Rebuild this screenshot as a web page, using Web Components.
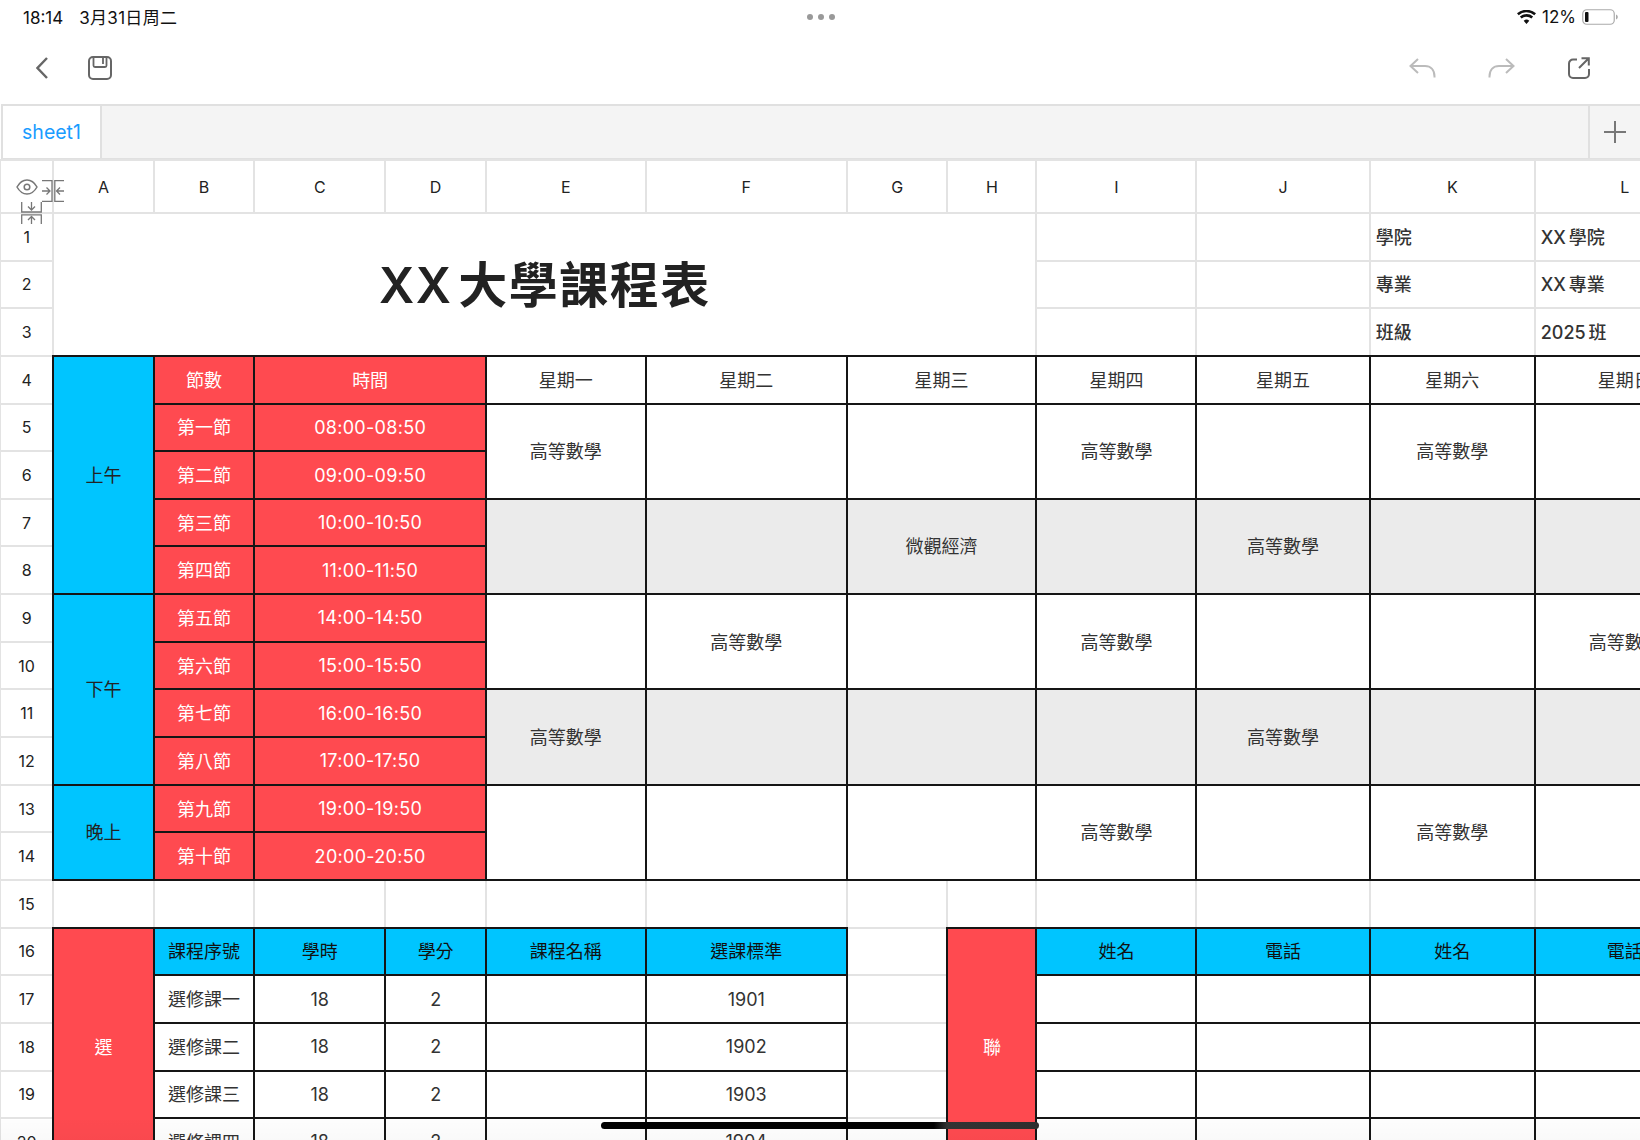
<!DOCTYPE html>
<html>
<head>
<meta charset="utf-8">
<title>XX 大學課程表</title>
<style>
html, body { margin: 0; width: 1640px; height: 1140px; overflow: hidden; background: #fff; }
body { position: relative; font-family: Inter, "Noto Sans CJK TC", sans-serif; }
</style>
</head>
<body>
<status-bar></status-bar>
<tool-bar></tool-bar>
<sheet-tabs>sheet1</sheet-tabs>
<sheet-grid></sheet-grid>
<home-bar></home-bar>

<script>
const icons = {
    back: [12, 22, '<path d="M11 1 1.5 11 11 21" fill="none" stroke="currentColor" stroke-width="2.4"/>'],
    save: [24, 24, '<rect x="1" y="1" width="22" height="22" rx="4" fill="none" stroke="currentColor" stroke-width="2"/><path d="M5.5 1v8.5a1.5 1.5 0 0 0 1.5 1.500h10a1.500 1.500 0 0 0 1.500-1.500V1M15 2v6" fill="none" stroke="currentColor" stroke-width="1.800"/>'],
    undo: [27, 20, '<path d="M9 1 1.500 8 9 15M2 8h14c5.500 0 9.500 3.500 9.500 10.500v1" fill="none" stroke="currentColor" stroke-width="2"/>'],
    redo: [27, 20, '<path d="M18 1 25.500 8 18 15M25 8H11C5.500 8 1.500 11.500 1.500 18.500v1" fill="none" stroke="currentColor" stroke-width="2"/>'],
    share: [22, 22, '<path d="M9 2.500H5a4 4 0 0 0-4 4V17a4 4 0 0 0 4 4h12a4 4 0 0 0 4-4v-5" fill="none" stroke="currentColor" stroke-width="2"/><path d="M11 11 20.500 1.500M13.500 1.200h7.300v7.300" fill="none" stroke="currentColor" stroke-width="2"/>'],
    plus: [22, 22, '<path d="M11 0v22M0 11h22" fill="none" stroke="currentColor" stroke-width="2"/>'],
    wifi: [19, 14, '<path d="M9.500 14 6.700 10.800a4.200 4.200 0 0 1 5.600 0ZM4.600 8.500 2.900 6.600a10 10 0 0 1 13.200 0l-1.700 1.900a7.400 7.400 0 0 0-9.800 0ZM1.700 5.200 0 3.300a14.500 14.500 0 0 1 19 0l-1.700 1.900a12 12 0 0 0-15.600 0Z" fill="currentColor"/>'],
    battery: [36, 16, '<rect x=".75" y=".75" width="31.500" height="14.500" rx="4" fill="none" stroke="#aaa" stroke-width="1.200"/><rect x="3" y="3" width="3.500" height="10" rx="1" fill="#111"/><path d="M34 5.500c1.200.4 1.800 1.300 1.800 2.500s-.6 2.100-1.800 2.500Z" fill="#aaa"/>'],
    eye: [22, 16, '<path d="M1 8c2.600-4.600 6-7 10-7s7.400 2.400 10 7c-2.600 4.600-6 7-10 7S3.600 12.600 1 8Z" fill="none" stroke="currentColor" stroke-width="1.500"/><circle cx="11" cy="8" r="2.800" fill="none" stroke="currentColor" stroke-width="1.500"/>'],
    shrinkh: [22, 22, '<path d="M0 .7h10V21.300H0M22 .7H12.800V21.300H22" fill="none" stroke="currentColor" stroke-width="1.300"/><path d="M0 11h7.500M4.500 7.500 8 11l-3.500 3.500M22 11h-7.500M18 7.500 14.500 11l3.500 3.500" fill="none" stroke="currentColor" stroke-width="1.300"/>'],
    shrinkv: [21, 22, '<path d="M.7 0v10H20.300V0M.7 22V12.800H20.300V22" fill="none" stroke="currentColor" stroke-width="1.300"/><path d="M10.500 0v7.500M7 4.500 10.500 8 14 4.500M10.500 22v-7.500M7 18l3.500-3.500L14 18" fill="none" stroke="currentColor" stroke-width="1.300"/>']
};

class AppIcon extends HTMLElement {
    connectedCallback() {
        const [w, h, body] = icons[this.getAttribute("name")];
        this.attachShadow({mode: "open"}).innerHTML = `
            <style>
                :host { display: block; width: ${w}px; height: ${h}px; flex: none; }
                svg { display: block; }
            </style>
            <svg width="${w}" height="${h}" viewBox="0 0 ${w} ${h}">${body}</svg>`;
    }
}
customElements.define("app-icon", AppIcon);

class StatusBar extends HTMLElement {
    constructor() {
        super();
        this.attachShadow({mode: "open"}).innerHTML = `
            <style>
                :host {
                    display: grid;
                    grid-template-columns: 1fr auto 1fr;
                    align-items: center;
                    height: 32px;
                    padding: 1px 22px 0 23px;
                    box-sizing: border-box;
                    font-size: 17px;
                    color: #111;
                }
                .left { display: flex; align-items: baseline; gap: 16px; }
                .date { letter-spacing: .3px; }
                .dots { display: flex; gap: 5px; }
                .dots i { width: 6px; height: 6px; border-radius: 50%; background: #999; }
                .right { display: flex; align-items: center; justify-content: flex-end; gap: 6px; }
            </style>
            <div class="left"><span>18:14</span><span class="date">3月31日周二</span></div>
            <div class="dots"><i></i><i></i><i></i></div>
            <div class="right">
                <app-icon name="wifi"></app-icon>
                <span>12%</span>
                <app-icon name="battery"></app-icon>
            </div>`;
    }
}
customElements.define("status-bar", StatusBar);

class ToolBar extends HTMLElement {
    constructor() {
        super();
        this.attachShadow({mode: "open"}).innerHTML = `
            <style>
                :host {
                    display: flex;
                    align-items: center;
                    justify-content: space-between;
                    height: 72px;
                    padding: 0 50px 0 36px;
                    box-sizing: border-box;
                    color: #666;
                }
                div { display: flex; align-items: center; }
                .l { gap: 40px; }
                .r { gap: 53px; }
                .off { color: #bbb; }
                .off:first-child { margin-right: -1px; }
            </style>
            <div class="l">
                <app-icon name="back"></app-icon>
                <app-icon name="save"></app-icon>
            </div>
            <div class="r">
                <app-icon class="off" name="undo"></app-icon>
                <app-icon class="off" name="redo"></app-icon>
                <app-icon name="share"></app-icon>
            </div>`;
    }
}
customElements.define("tool-bar", ToolBar);

class SheetTabs extends HTMLElement {
    constructor() {
        super();
        this.attachShadow({mode: "open"}).innerHTML = `
            <style>
                :host {
                    display: flex;
                    height: 56px;
                    margin-left: 1px;
                    box-sizing: border-box;
                    border: solid #e0e0e0;
                    border-width: 2px 0 2px 2px;
                    background: #f4f4f4;
                }
                .tab {
                    width: 99px;
                    box-sizing: border-box;
                    display: flex;
                    align-items: center;
                    justify-content: center;
                    background: #fff;
                    border-right: 2px solid #e0e0e0;
                    color: #1a9cff;
                    font-size: 19.500px;
                }
                .fill { flex: 1; }
                .add {
                    width: 50px;
                    display: flex;
                    align-items: center;
                    justify-content: center;
                    background: #f4f4f4;
                    border-left: 2px solid #e0e0e0;
                    color: #777;
                }
            </style>
            <div class="tab"><slot></slot></div>
            <div class="fill"></div>
            <div class="add"><app-icon name="plus"></app-icon></div>`;
    }
}
customElements.define("sheet-tabs", SheetTabs);

class SheetCell extends HTMLElement {
    connectedCallback() {
        const a = n => this.getAttribute(n);
        this.style.gridArea = `${a("r")} / ${a("c")} / span ${a("rs") || 1} / span ${a("cs") || 1}`;
        // CJK glyphs sit lower than latin ones, numeric cells don't need the lift
        if (/^[\d:\-]+$/.test(this.textContent)) this.setAttribute("num", "");
        this.attachShadow({mode: "open"}).innerHTML = `
            <style>
                :host {
                    position: relative;
                    display: flex;
                    align-items: center;
                    justify-content: center;
                    box-sizing: border-box;
                    min-width: 0;
                    padding-bottom: 2px;
                    font-size: 18px;
                    color: #333;
                    white-space: nowrap;
                    background: #fff;
                }
                :host([num]) { padding-bottom: 0; }
                :host([num][cs="2"]) { letter-spacing: .3px; }
                :host::after {
                    content: "";
                    position: absolute;
                    inset: -1px;
                    border: 2px solid #e3e3e3;
                    pointer-events: none;
                }
                :host([kind="index"]) { padding-bottom: 0; font-size: 16px; color: #222; }
                :host([kind="title"]) {
                    padding-bottom: 5px;
                    font-size: 49px;
                    font-weight: 600;
                    color: #222;
                    letter-spacing: 1.500px;
                    word-spacing: -8px;
                }
                :host([kind="info"]) {
                    justify-content: flex-start;
                    padding-left: 6px;
                    font-weight: 500;
                    word-spacing: -2px;
                }
                :host([kind="black"]), :host([kind="grey"]), :host([kind="red"]),
                :host([kind="blue"]), :host([kind="head"]) { z-index: 1; }
                :host([kind="black"])::after, :host([kind="grey"])::after, :host([kind="red"])::after,
                :host([kind="blue"])::after, :host([kind="head"])::after { border-color: #151515; }
                :host([kind="grey"]) { background: #ebebeb; }
                :host([kind="red"]) { background: #ff4a50; color: #fff; }
                :host([kind="blue"]) { background: #00c5ff; color: #222; }
                :host([kind="head"]) { background: #00c5ff; color: #111; }
            </style>
            <slot></slot>`;
    }
}
customElements.define("sheet-cell", SheetCell);

class SheetGrid extends HTMLElement {
    constructor() {
        super();
        const cells = [];
        const add = (c, r, kind, text = "", cs = 1, rs = 1) =>
            cells.push(`<sheet-cell c="${c}" r="${r}" cs="${cs}" rs="${rs}" kind="${kind}">${text}</sheet-cell>`);

        // corner, column letters, row numbers
        add(1, 1, "index");
        "ABCDEFGHIJKL".split("").forEach((l, i) => add(i + 2, 1, "index", l));
        for (let n = 1; n <= 20; n++) add(1, n + 1, "index", n);

        // rows 1 to 3
        add(2, 2, "title", "XX 大學課程表", 8, 3);
        [["學院", "XX 學院"], ["專業", "XX 專業"], ["班級", "2025 班"]].forEach((t, i) => {
            add(10, i + 2, "plain");
            add(11, i + 2, "plain");
            add(12, i + 2, "info", t[0]);
            add(13, i + 2, "info", t[1]);
        });

        // rows 4 to 14, timetable
        add(2, 5, "blue", "上午", 1, 5);
        add(2, 10, "blue", "下午", 1, 4);
        add(2, 14, "blue", "晚上", 1, 2);
        add(3, 5, "red", "節數");
        add(4, 5, "red", "時間", 2);
        const slots = ["第一節 08:00-08:50", "第二節 09:00-09:50", "第三節 10:00-10:50", "第四節 11:00-11:50",
            "第五節 14:00-14:50", "第六節 15:00-15:50", "第七節 16:00-16:50", "第八節 17:00-17:50",
            "第九節 19:00-19:50", "第十節 20:00-20:50"];
        slots.forEach((s, i) => {
            const [name, time] = s.split(" ");
            add(3, i + 6, "red", name);
            add(4, i + 6, "red", time, 2);
        });
        const M = "高等數學";
        const dayCols = [[6, 1], [7, 1], [8, 2], [10, 1], [11, 1], [12, 1], [13, 1]];
        ["星期一", "星期二", "星期三", "星期四", "星期五", "星期六", "星期日"].forEach((d, i) =>
            add(dayCols[i][0], 5, "black", d, dayCols[i][1]));
        [
            [M, "", "", M, "", M, ""],
            ["", "", "微觀經濟", "", M, "", ""],
            ["", M, "", M, "", "", M],
            [M, "", "", "", M, "", ""],
            ["", "", "", M, "", M, ""]
        ].forEach((row, i) => row.forEach((t, j) =>
            add(dayCols[j][0], 6 + i * 2, i % 2 ? "grey" : "black", t, dayCols[j][1], 2)));

        // row 15
        for (let c = 2; c <= 13; c++) add(c, 16, "plain");

        // rows 16 to 20
        add(2, 17, "red", "選", 1, 5);
        ["課程序號", "學時", "學分", "課程名稱", "選課標準"].forEach((t, i) => add(3 + i, 17, "head", t));
        for (let c = 0; c < 5; c++) add(8, 17 + c, "plain");
        add(9, 17, "red", "聯", 1, 5);
        ["姓名", "電話", "姓名", "電話"].forEach((t, i) => add(10 + i, 17, "head", t));
        ["一", "二", "三", "四"].forEach((n, i) => {
            const r = 18 + i;
            add(3, r, "black", "選修課" + n);
            add(4, r, "black", "18");
            add(5, r, "black", "2");
            add(6, r, "black");
            add(7, r, "black", String(1901 + i));
            for (let c = 10; c <= 13; c++) add(c, r, "black");
        });

        this.attachShadow({mode: "open"}).innerHTML = `
            <style>
                :host {
                    position: relative;
                    display: grid;
                    grid-template-columns: 53.300px 100.400px 100.600px 131px 100.700px 159.800px 201px 100.700px 89px 159.900px 173.500px 164.900px 180px;
                    grid-template-rows: 53px repeat(20, 47.650px);
                    width: 1715px;
                }
                .corner { position: absolute; z-index: 2; color: #777; }
            </style>
            ${cells.join("")}
            <app-icon class="corner" name="eye" style="left:16px;top:19px"></app-icon>
            <app-icon class="corner" name="shrinkh" style="left:42px;top:20px"></app-icon>
            <app-icon class="corner" name="shrinkv" style="left:21px;top:42px"></app-icon>`;
    }
}
customElements.define("sheet-grid", SheetGrid);

class HomeBar extends HTMLElement {
    constructor() {
        super();
        this.attachShadow({mode: "open"}).innerHTML = `
            <style>
                :host {
                    position: absolute;
                    left: 0;
                    right: 0;
                    bottom: 0;
                    height: 20px;
                    z-index: 5;
                    background: linear-gradient(rgba(0,0,0,.008), rgba(0,0,0,.025));
                }
                .pill {
                    position: absolute;
                    left: 601px;
                    top: 2px;
                    width: 438px;
                    height: 7px;
                    border-radius: 3.500px;
                    background: linear-gradient(90deg, #000 76%, #333 79%, #2e2e2e);
                }
            </style>
            <div class="pill"></div>`;
    }
}
customElements.define("home-bar", HomeBar);
</script>
</body>
</html>
